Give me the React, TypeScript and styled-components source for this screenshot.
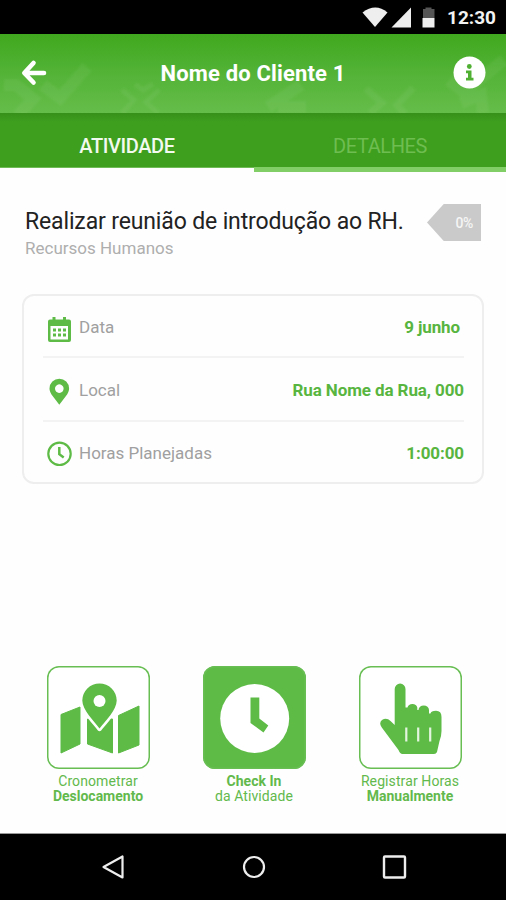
import React from "react";
import styled, { createGlobalStyle } from "styled-components";

const GREEN = "#5dbb46";

const GlobalStyle = createGlobalStyle`
  * { box-sizing: border-box; }
  body { margin: 0; background: #fefefe; font-family: Roboto, sans-serif; }
  svg { display: block; flex: none; }
`;

const Screen = styled.div`
  width: 506px;
  height: 900px;
  display: flex;
  flex-direction: column;
  background: #fefefe;
  overflow: hidden;
`;

const StatusBar = styled.div`
  height: 34px;
  flex: none;
  background: #000;
  display: flex;
  justify-content: flex-end;
  padding-right: 9px;
`;

const Time = styled.span`
  color: #f2f2f2;
  font-size: 19px;
  font-weight: 700;
  line-height: 35px;
  width: 50px;
  white-space: nowrap;
`;

const Header = styled.header`
  position: relative;
  height: 79px;
  flex: none;
  display: flex;
  align-items: center;
  justify-content: space-between;
  padding: 0 20px;
  background: linear-gradient(#40a81e, #53b337 50%, #65bd49);
`;

const Pattern = styled.svg`
  position: absolute;
  inset: 0;
`;

const HeaderIcon = styled.div`
  position: relative;
  width: 33px;
  height: 79px;
`;

const Title = styled.h1`
  position: relative;
  margin: 0;
  color: #fff;
  font-size: 22px;
  font-weight: 700;
  line-height: 78px;
  letter-spacing: 0.15px;
`;

const Tabs = styled.nav`
  height: 59px;
  flex: none;
  display: grid;
  grid-template-columns: 254px 252px;
`;

const Tab = styled.div<{ $active?: boolean }>`
  height: ${(p) => (p.$active ? 55 : 59)}px;
  border-bottom: ${(p) => (p.$active ? "1px solid #6fbb56" : "5px solid #82ce66")};
  background: linear-gradient(#36901a, #3e9f1e 9px);
  color: ${(p) => (p.$active ? "#f2f9ef" : "#6ebd51")};
  font-size: 20px;
  line-height: 66px;
  text-align: center;
  letter-spacing: -0.4px;
  font-weight: ${(p) => (p.$active ? 500 : 400)};
`;

const Content = styled.main`
  flex: 1;
  display: flex;
  flex-direction: column;
`;

const Activity = styled.section`
  height: 122px;
  display: flex;
  justify-content: space-between;
  padding: 32px 25px 0 25px;
`;

const ActivityName = styled.h2`
  margin: 0;
  color: #222;
  font-size: 23px;
  font-weight: 400;
  line-height: 36px;
  letter-spacing: -0.14px;
  white-space: nowrap;
`;

const Department = styled.div`
  color: #aeaeae;
  font-size: 17px;
  line-height: 16px;
`;

const Progress = styled.div`
  width: 54px;
  height: 37px;
  background: #cacaca;
  clip-path: polygon(0 50%, 31% 0, 100% 0, 100% 100%, 31% 100%);
  color: #f5f5f5;
  font-size: 14px;
  font-weight: 500;
  line-height: 38px;
  text-align: right;
  padding-right: 8px;
  letter-spacing: -0.4px;
`;

const Card = styled.section`
  margin: 0 22px;
  height: 190px;
  border: 2px solid #eee;
  border-radius: 12px;
  padding: 0 18px 0 19px;
  display: grid;
  grid-template-rows: 62px 64px 60px;
`;

const Row = styled.div`
  display: flex;
  align-items: center;
  border-bottom: 2px solid #f3f3f3;
  padding: 2px 0 0 2px;
  &:last-child { border-bottom: 0; padding-top: 3px; }
`;

const Label = styled.span`
  color: #a0a0a0;
  font-size: 17px;
  line-height: 20px;
  margin-left: 6px;
  margin-bottom: 1px;
`;

const Value = styled.span<{ $inset?: number }>`
  margin: 0 ${(p) => p.$inset ?? 0}px 1px auto;
  color: #58b53f;
  font-size: 17px;
  line-height: 20px;
  font-weight: 700;
  letter-spacing: -0.1px;
`;

const Actions = styled.section`
  margin: auto 0 29px;
  padding: 0 26px 0 28px;
  display: flex;
  justify-content: space-between;
`;

const Action = styled.button`
  width: 140px;
  padding: 0;
  border: 0;
  background: none;
  display: flex;
  flex-direction: column;
  align-items: center;
  font-family: inherit;
  color: #62b94c;
`;

const Tile = styled.span<{ $filled?: boolean }>`
  width: 103px;
  height: 103px;
  border-radius: 12px;
  box-shadow: inset 0 0 0 1.5px #68be53;
  background: ${(p) => (p.$filled ? GREEN : "#fff")};
  margin-bottom: 5px;
`;

const Caption = styled.span<{ $bold?: boolean }>`
  font-size: 14px;
  line-height: 15px;
  font-weight: ${(p) => (p.$bold ? 700 : 400)};
  letter-spacing: ${(p) => (p.$bold ? 0 : 0.1)}px;
  white-space: nowrap;
`;

const NavBar = styled.footer`
  height: 67px;
  flex: none;
  background: #000;
  border-top: 1px solid #999;
  display: flex;
  justify-content: space-between;
  align-items: center;
  padding: 0 98px 0 99px;
`;

const StatusIcons = () => (
  <svg width="86" height="34" viewBox="361 0 86 34">
    <path d="M362.5 12.5q13-10 25 0L375 27z" fill="#eee" />
    <path d="M391.500 27.500L411 7.500v20z" fill="#eee" />
    <path d="M423 9h2.500V7.500h6V9h3v9h-11.500z" fill="#555" />
    <path d="M422.500 18h12v9.500h-12z" fill="#eee" />
  </svg>
);

const HeaderPattern = () => (
  <Pattern width="506" height="79" viewBox="0 34 506 79">
    <defs>
      <filter id="soften" x="-5%" y="-20%" width="110%" height="140%">
        <feGaussianBlur stdDeviation="1" />
      </filter>
    </defs>
    <g fill="none" stroke="#fff" strokeOpacity="0.05" strokeWidth="10" filter="url(#soften)">
      <path d="M4 85h12l17 14-15 16M43 85l17 13 27-31" strokeWidth="12" />
      <path d="M122 90l12 10-12 13M159 90l-13 12 12 11M135 84l8 6 10-6" strokeWidth="5" />
      <path d="M268 107l33-22M278 107h28" strokeWidth="12" />
      <path d="M366 89l16 14-12 10M413 88l-16 17 8 9" strokeWidth="7" />
      <path d="M449 80l15 12 40-32M461 103l20-8 2 18" strokeWidth="12" />
    </g>
  </Pattern>
);

const BackIcon = () => (
  <svg width="33" height="79" viewBox="20 34 33 79">
    <path d="M33.500 63L24.300 73L33.500 82.500M24.800 73H44" fill="none" stroke="#fff" strokeWidth="4.600" strokeLinecap="round" strokeLinejoin="round" />
  </svg>
);

const InfoIcon = () => (
  <svg width="33" height="79" viewBox="453 34 33 79">
    <circle cx="469.500" cy="72.500" r="16" fill="#fff" />
    <circle cx="469.300" cy="66.500" r="2.400" fill="#50b034" />
    <path d="M466 70.500h5.500v7.200h2v2.800H466v-2.800h2v-4.400h-2z" fill="#50b034" />
  </svg>
);

const CalendarIcon = () => (
  <svg width="28" height="32" viewBox="45 311 28 32">
    <path d="M50 319.500h2.500v-2.500h3v2.500h7.500v-2.500h3v2.500h3q2 0 2 2v18.500q0 2-2 2H50q-2 0-2-2v-18.500q0-2 2-2z" fill={GREEN} />
    <path d="M50.500 326h17.500v13.500H50.500z" fill="#fff" />
    <path d="M53 328.500h3v3h-3zm5 0h3v3h-3zm5 0h3v3h-3zm-10 5h3v3h-3zm5 0h3v3h-3zm5 0h3v3h-3z" fill={GREEN} />
  </svg>
);

const PinIcon = () => (
  <svg width="28" height="30" viewBox="45 375 28 30">
    <path fillRule="evenodd" d="M59.300 404.800L51.500 394.500C49.500 391.500 49.500 389 49.500 388.500a9.800 9.800 0 0 1 19.600 0c0 2-.8 4-2 6zM59.300 384.300a4.300 4.300 0 1 0 .01 0z" fill={GREEN} />
  </svg>
);

const ClockIcon = () => (
  <svg width="28" height="28" viewBox="45 440 28 28">
    <circle cx="59.500" cy="453.800" r="11.200" fill="none" stroke={GREEN} strokeWidth="2.200" />
    <path d="M59.300 447v7.200l4.400 3.300" fill="none" stroke={GREEN} strokeWidth="2.500" />
  </svg>
);

const MapIcon = () => (
  <svg width="103" height="103">
    <g fill={GREEN} stroke={GREEN} strokeWidth="1" strokeLinejoin="round">
      <path d="M14 48.500L33 41V78L14 87z" />
      <path d="M40.500 53L65.500 53V87L40.500 78z" />
      <path d="M71.500 49.500L92 40V79L71.500 87z" />
    </g>
    <path d="M52.500 62.500C47 55.500 35.300 43.500 35.300 34.600a17.200 17.200 0 0 1 34.400 0C69.700 43.500 58.500 55.500 52.500 62.500z" fill={GREEN} stroke="#fff" strokeWidth="5" paintOrder="stroke" strokeLinejoin="round" />
    <circle cx="52.500" cy="35" r="6" fill="#fff" />
  </svg>
);

const BigClockIcon = () => (
  <svg width="103" height="103">
    <circle cx="51.700" cy="52.500" r="34.500" fill="#fff" />
    <path d="M47.500 31.500h8.800v21l9 7-4.800 7-13-9.500z" fill={GREEN} />
  </svg>
);

const HandIcon = () => (
  <svg width="103" height="103">
    <path d="M43.500 88Q41 88 39.500 84L22.800 61.500Q19.500 57 23 54Q27.500 51 31.500 55L35.700 59V23a5.400 5.400 0 0 1 10.800 0V41.500H48.500a5 4.500 0 0 1 9.800 0V44H59.500a5.200 4.500 0 0 1 10.500 0V47.500H71.500Q72 44.700 77 44.700Q82.500 44.700 82.500 51V65Q82.500 70 80.500 75L78 86Q77.200 88 75 88z" fill={GREEN} />
    <path d="M47.300 61.500V75.500M59.200 61.500V75.500M71.200 61.500V75.500" stroke="#e4f5df" strokeWidth="2.200" />
  </svg>
);

export default function App() {
  return (
    <Screen>
      <GlobalStyle />
      <StatusBar>
        <StatusIcons />
        <Time>12:30</Time>
      </StatusBar>
      <Header>
        <HeaderPattern />
        <HeaderIcon><BackIcon /></HeaderIcon>
        <Title>Nome do Cliente 1</Title>
        <HeaderIcon><InfoIcon /></HeaderIcon>
      </Header>
      <Tabs>
        <Tab $active>ATIVIDADE</Tab>
        <Tab>DETALHES</Tab>
      </Tabs>
      <Content>
        <Activity>
          <div>
            <ActivityName>Realizar reunião de introdução ao RH.</ActivityName>
            <Department>Recursos Humanos</Department>
          </div>
          <Progress>0%</Progress>
        </Activity>
        <Card>
          <Row><CalendarIcon /><Label>Data</Label><Value $inset={4}>9 junho</Value></Row>
          <Row><PinIcon /><Label>Local</Label><Value>Rua Nome da Rua, 000</Value></Row>
          <Row><ClockIcon /><Label>Horas Planejadas</Label><Value>1:00:00</Value></Row>
        </Card>
        <Actions>
          <Action>
            <Tile><MapIcon /></Tile>
            <Caption>Cronometrar</Caption>
            <Caption $bold>Deslocamento</Caption>
          </Action>
          <Action>
            <Tile $filled><BigClockIcon /></Tile>
            <Caption $bold>Check In</Caption>
            <Caption>da Atividade</Caption>
          </Action>
          <Action>
            <Tile><HandIcon /></Tile>
            <Caption>Registrar Horas</Caption>
            <Caption $bold>Manualmente</Caption>
          </Action>
        </Actions>
      </Content>
      <NavBar>
        <svg width="28" height="28"><path d="M4.500 14L23.500 3.500V24.500z" fill="none" stroke="#eee" strokeWidth="2.200" strokeLinejoin="round" /></svg>
        <svg width="28" height="28"><circle cx="14" cy="14" r="10" fill="none" stroke="#eee" strokeWidth="2.200" /></svg>
        <svg width="28" height="28"><rect x="4" y="3.500" width="21" height="21" rx="1" fill="none" stroke="#eee" strokeWidth="2.400" /></svg>
      </NavBar>
    </Screen>
  );
}
